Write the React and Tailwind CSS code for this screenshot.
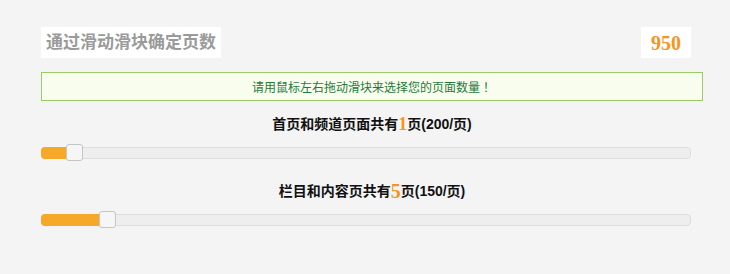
import React from 'react'

// One slider row: centred caption above a jQuery-UI style track
function PageSlider({ label, count, countClass, price, fillClass, handleClass, rowClass }) {
  return (
    <div>
      <div className={`${rowClass} h-[24px] w-[662px] flex items-center justify-center text-[14px] font-bold text-[#111]`}>
        <span>{label}</span>
        <span className={`${countClass} font-['Liberation_Serif',serif] font-bold text-[#f7941d] leading-none`}>
          {count}
        </span>
        <span>页({price}/页)</span>
      </div>
      <div className="mt-[11px] relative w-[650px] h-[12px] rounded-[4px] border border-[#dddddd] bg-[#eeeeee]">
        <div className={`${fillClass} absolute top-[-1px] left-[-1px] h-[12px] rounded-l-[4px] bg-[#f6a828]`} />
        <div className={`${handleClass} absolute top-[-4px] w-[17px] h-[17px] rounded-[3px] border border-[#c5c5c5] bg-[#f6f6f6]`} />
      </div>
    </div>
  )
}

export default function App() {
  return (
    <div className="w-[730px] h-[274px] bg-[#f4f4f4] pl-[41px] pt-[27px] font-['Liberation_Sans','Noto_Sans_CJK_SC',sans-serif]">
      {/* Header */}
      <div className="w-[650px] flex justify-between">
        <div className="h-[31px] bg-white px-[5px] flex items-center text-[17px] font-bold text-[#9a9a9a]">
          通过滑动滑块确定页数
        </div>
        <div className="h-[31px] w-[50px] bg-white flex items-center justify-center font-['Liberation_Serif',serif] text-[20px] font-bold text-[#f7941d]">
          950
        </div>
      </div>

      {/* Hint */}
      <div className="mt-[14px] w-[662px] h-[29px] border border-[#99cc66] bg-[#f8fdee] flex items-center justify-center font-['Noto_Sans_CJK_SC',sans-serif] text-[12px] text-[#1f7a3c]">
        请用鼠标左右拖动滑块来选择您的页面数量
        <span className="font-['Noto_Sans_CJK_JP',sans-serif]">！</span>
      </div>

      <PageSlider
        rowClass="mt-[11px]"
        label="首页和频道页面共有"
        count="1"
        countClass="text-[18px]"
        price="200"
        fillClass="w-[34px]"
        handleClass="left-[24px]"
      />
      <PageSlider
        rowClass="mt-[20px]"
        label="栏目和内容页共有"
        count="5"
        countClass="text-[20px]"
        price="150"
        fillClass="w-[67px]"
        handleClass="left-[57px]"
      />
    </div>
  )
}
